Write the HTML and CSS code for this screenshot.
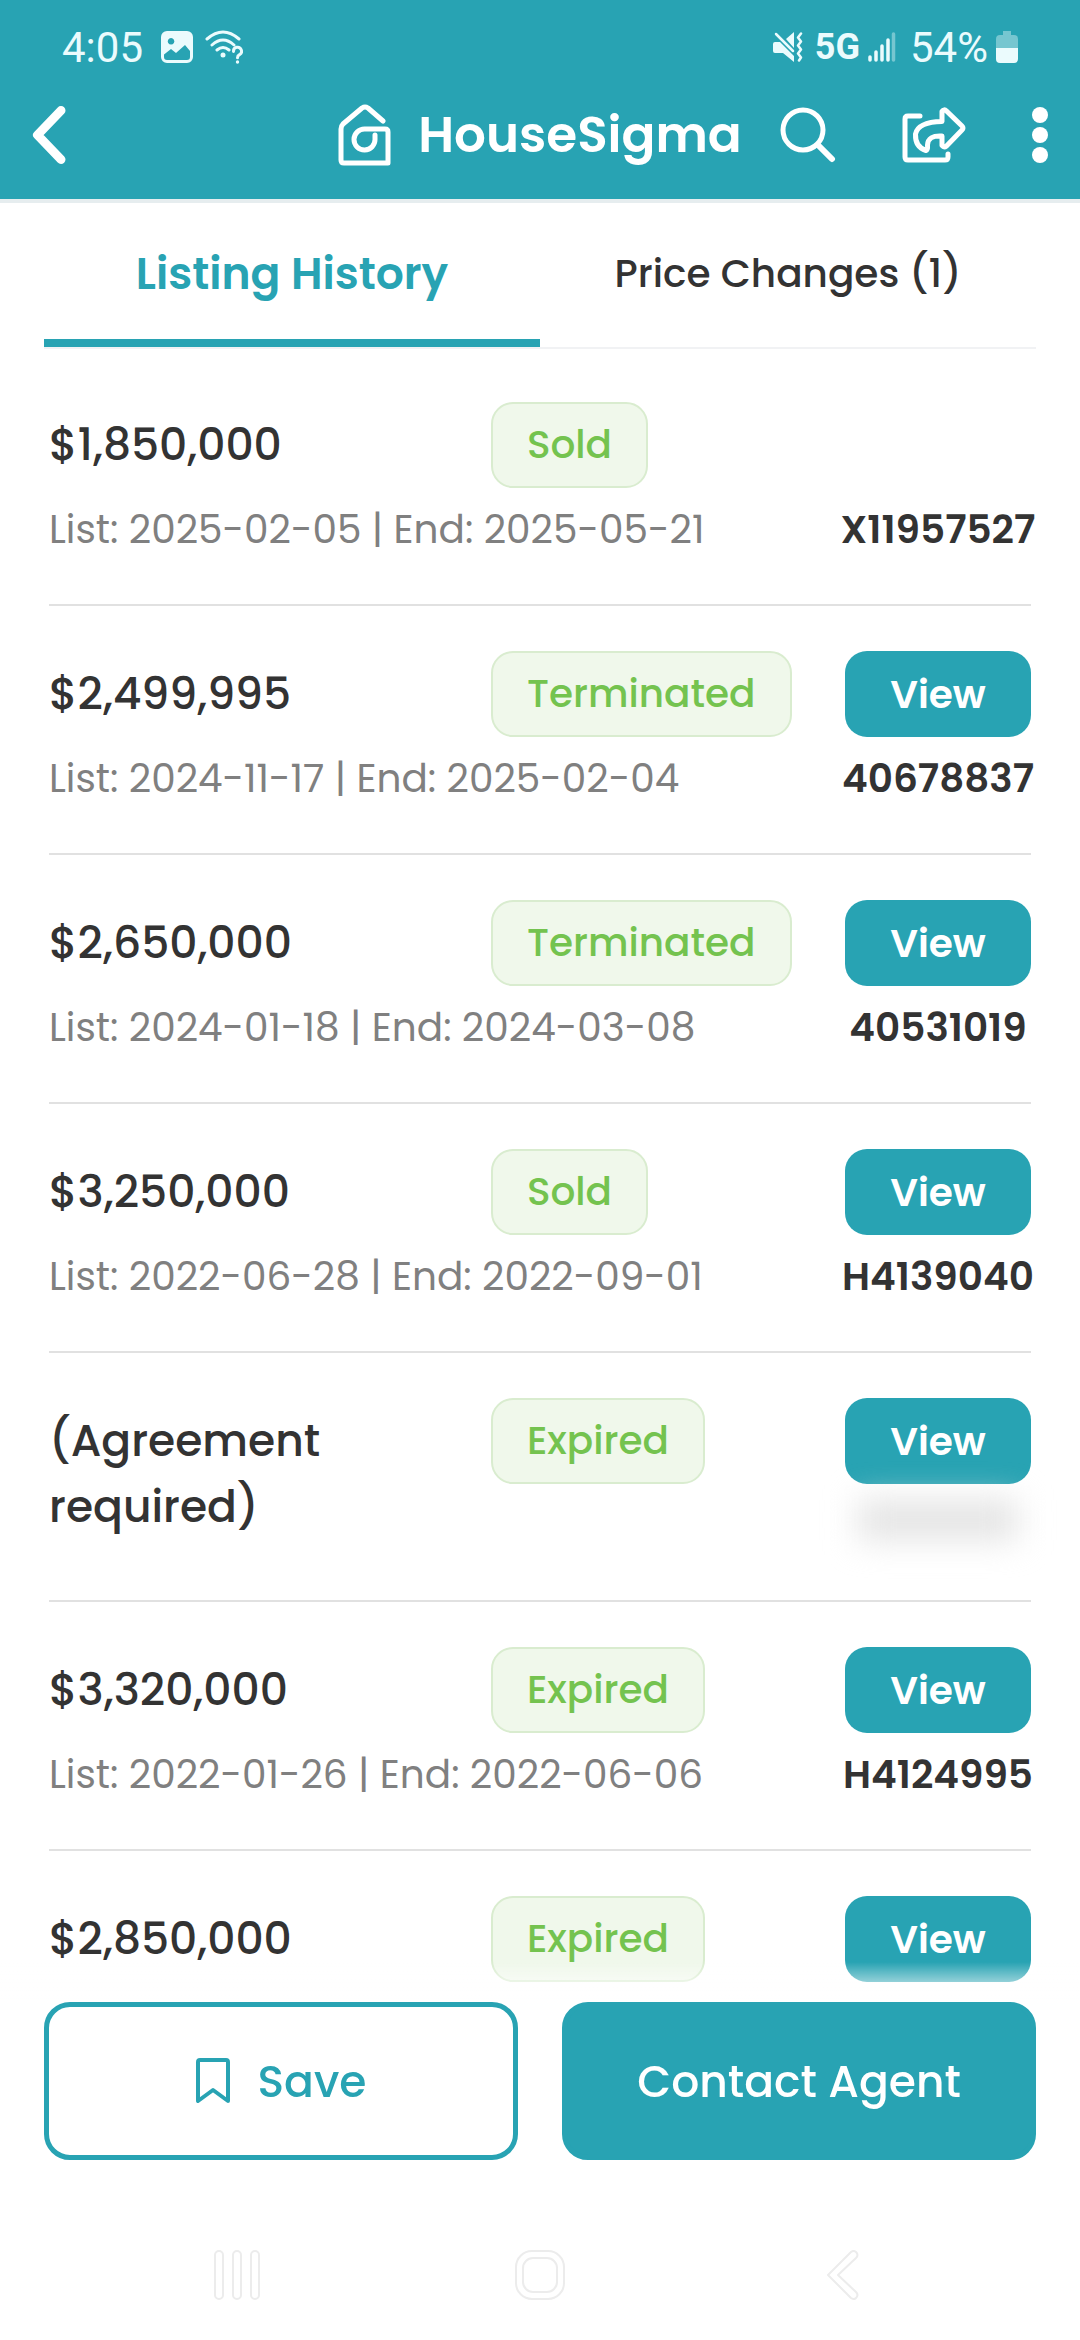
FILE: index.html
```html
<!DOCTYPE html>
<html lang="en">
    <head>
        <meta charset="UTF-8">
        <meta name="viewport" content="width=device-width, initial-scale=1">
        <title>HouseSigma - Listing History</title>
        <link rel="stylesheet" href="styles.css">
    </head>
    <body>
        <header class="header">
            <div class="statusBar">
                <span class="time">4:05</span>
                <svg class="statusImage" width="32" height="32" viewBox="0 0 32 32">
                    <path fill="currentColor" fill-rule="evenodd" d="M6 0H26a6 6 0 0 1 6 6V26a6 6 0 0 1-6 6H6a6 6 0 0 1-6-6V6a6 6 0 0 1 6-6zM10 7a3.300 3.300 0 1 0 .1 0zM3 23.500V26a3 3 0 0 0 3 3H26a3 3 0 0 0 3-3V20l-5-6-9 8-5-4z"/>
                </svg>
                <svg class="statusWifi" width="38" height="34" viewBox="0 0 38 34" fill="none" stroke="currentColor" stroke-width="3" stroke-linecap="round">
                    <path d="M2 9Q18-5 34 9M7 15Q18 5 29 15M12 20Q18 15 24 20"/>
                    <circle cx="18" cy="25" r="2.500" fill="currentColor" stroke="none"/>
                    <path d="M28.500 21.500a4 4 0 1 1 6 3.200q-2 1-2 3"/>
                    <circle cx="32.500" cy="32" r="1.700" fill="currentColor" stroke="none"/>
                </svg>
                <svg class="statusMute" width="30" height="30" viewBox="0 0 30 30">
                    <path fill="currentColor" d="M0 12q0-2 2-2H7L21 24V30L10 21H2q-2 0-2-2zM13 7L21 0V16z"/>
                    <path fill="none" stroke="currentColor" stroke-width="2.500" stroke-linecap="round" d="M3 2L20 19"/>
                    <path fill="none" stroke="currentColor" stroke-width="2.500" stroke-linecap="round" stroke-linejoin="round" d="M28 1.500l-3 4 3 4-3 4 3 4-3 4 3 4-2 3"/>
                </svg>
                <b class="network">5G</b>
                <svg class="statusSignal" width="28" height="30" viewBox="0 0 28 30" stroke="currentColor" stroke-width="3.500" stroke-linecap="round">
                    <path d="M2 25v3M8 20v8M14 14v14M20 8v20"/>
                    <path opacity=".4" d="M25.500 2v26"/>
                </svg>
                <span class="battery">54%</span>
                <svg width="22" height="32" viewBox="0 0 22 32" fill="currentColor">
                    <path opacity=".4" d="M7 0h8v4h3q4 0 4 4v9H0V8q0-4 4-4h3z"/>
                    <path d="M0 17h22v11q0 4-4 4H4q-4 0-4-4z"/>
                </svg>
            </div>
            <nav class="navBar">
                <button type="button" class="iconBtn" aria-label="Back">
                    <svg width="34" height="60" viewBox="0 0 34 60" fill="none" stroke="currentColor" stroke-width="9" stroke-linecap="round" stroke-linejoin="round"><path d="M29 5.500L5.500 30 29 54.500"/></svg>
                </button>
                <a href="#" class="brand">
                    <svg width="53" height="62" viewBox="0 0 53 62" fill="none" stroke="currentColor" stroke-width="5" stroke-linecap="round" stroke-linejoin="round">
                        <path d="M45 17L30 4q-3-2-6 0L5 20Q3 22 3 25V56q0 3 3 3H50V28q0-3-3-3H27A10.500 10.500 0 1 0 37 35V31"/>
                    </svg>
                    <span>HouseSigma</span>
                </a>
                <div class="actions">
                    <button type="button" class="iconBtn" aria-label="Search">
                        <svg width="56" height="56" viewBox="0 0 56 56" fill="none" stroke="currentColor" stroke-linecap="round"><circle cx="23" cy="23" r="20" stroke-width="5"/><path stroke-width="6" d="M39 39L52 52"/></svg>
                    </button>
                    <button type="button" class="iconBtn" aria-label="Share">
                        <svg width="64" height="56" viewBox="0 0 64 56" fill="none" stroke="currentColor" stroke-width="5" stroke-linecap="round" stroke-linejoin="round">
                            <path d="M18 9H6q-3 0-3 3V50q0 3 3 3H43q3 0 3-3V47"/>
                            <path d="M40 4.500Q42 1.500 44.500 4L60 19q2 2 0 4L44.500 39Q42 41 40 38.500V29Q26 28 25.500 38 26 43 24 43.500 13 40 13.500 27 16 15 40 14.500z"/>
                        </svg>
                    </button>
                    <button type="button" class="iconBtn" aria-label="More">
                        <svg width="16" height="56" viewBox="0 0 16 56" fill="currentColor"><circle cx="8" cy="8" r="8"/><circle cx="8" cy="28" r="8"/><circle cx="8" cy="48" r="8"/></svg>
                    </button>
                </div>
            </nav>
        </header>

        <div class="tabs" role="tablist">
            <button type="button" role="tab" aria-selected="true" class="tab active">Listing History</button>
            <button type="button" role="tab" aria-selected="false" class="tab">Price Changes (1)</button>
        </div>

        <ul class="list">
            <li class="item">
                <span class="price">$1,850,000</span>
                <span class="badge">Sold</span>
                <span class="dates">List: 2025-02-05 | End: 2025-05-21</span>
                <span class="mls">X11957527</span>
            </li>
            <li class="item">
                <span class="price">$2,499,995</span>
                <span class="badge">Terminated</span>
                <button type="button" class="viewBtn">View</button>
                <span class="dates">List: 2024-11-17 | End: 2025-02-04</span>
                <span class="mls">40678837</span>
            </li>
            <li class="item">
                <span class="price">$2,650,000</span>
                <span class="badge">Terminated</span>
                <button type="button" class="viewBtn">View</button>
                <span class="dates">List: 2024-01-18 | End: 2024-03-08</span>
                <span class="mls">40531019</span>
            </li>
            <li class="item">
                <span class="price">$3,250,000</span>
                <span class="badge">Sold</span>
                <button type="button" class="viewBtn">View</button>
                <span class="dates">List: 2022-06-28 | End: 2022-09-01</span>
                <span class="mls">H4139040</span>
            </li>
            <li class="item">
                <span class="price locked">(Agreement required)</span>
                <span class="badge">Expired</span>
                <button type="button" class="viewBtn">View</button>
                <span class="mlsHidden"></span>
            </li>
            <li class="item">
                <span class="price">$3,320,000</span>
                <span class="badge">Expired</span>
                <button type="button" class="viewBtn">View</button>
                <span class="dates">List: 2022-01-26 | End: 2022-06-06</span>
                <span class="mls">H4124995</span>
            </li>
            <li class="item">
                <span class="price">$2,850,000</span>
                <span class="badge">Expired</span>
                <button type="button" class="viewBtn">View</button>
            </li>
        </ul>

        <footer class="footer">
            <div class="buttons">
                <button type="button" class="bigBtn saveBtn">
                    <svg width="34" height="46" viewBox="0 0 34 46" fill="none" stroke="currentColor" stroke-width="4" stroke-linejoin="round"><path d="M2 4q0-2 2-2H30q2 0 2 2V43L17 32 2 43z"/></svg>
                    Save
                </button>
                <button type="button" class="bigBtn contactBtn">Contact Agent</button>
            </div>
            <div class="systemNav">
                <svg width="46" height="50" viewBox="0 0 46 50" fill="none" stroke="currentColor" stroke-width="2"><rect x="1" y="1" width="8" height="48" rx="4"/><rect x="19" y="1" width="8" height="48" rx="4"/><rect x="37" y="1" width="8" height="48" rx="4"/></svg>
                <svg width="50" height="50" viewBox="0 0 50 50" fill="none" stroke="currentColor" stroke-width="2"><rect x="1" y="1" width="48" height="48" rx="16"/><rect x="8" y="8" width="34" height="34" rx="10"/></svg>
                <svg width="34" height="50" viewBox="0 0 34 50" fill="none" stroke="currentColor" stroke-width="2" stroke-linejoin="round"><path d="M2 25L25 2q3-2 5 0 3 3 0 6L12 25 30 42q3 3 0 6-2 2-5 0z"/></svg>
            </div>
        </footer>
    </body>
</html>
```

FILE: styles.css
```css
html, body {
    margin: 0px;
    padding: 0px;
}

body {
    background-color: #fff;
    color: #333;
    font-family: "Poppins", "Inter", sans-serif;
}

button {
    margin: 0px;
    padding: 0px;
    border: none;
    background: none;
    color: inherit;
    font-family: inherit;
    cursor: pointer;
}

svg {
    display: block;
    flex: none;
}

/* header */

.header {
    padding-bottom: 23px;
    background-color: #28a3b3;
    border-bottom: 4px solid #e6edef;
    color: #fff;
}

.statusBar {
    display: flex;
    align-items: center;
    height: 94px;
    padding: 0px 62px;
    color: #ebfbfd;
    font-family: Roboto, sans-serif;
    font-size: 42px;
}

.statusImage {
    margin-left: 18px;
}

.statusWifi {
    margin-left: 12px;
}

.statusMute {
    margin-left: auto;
}

.network {
    margin-left: 12px;
    font-size: 36px;
}

.statusSignal {
    margin-left: 8px;
}

.battery {
    margin-left: 14px;
    margin-right: 8px;
}

.navBar {
    display: grid;
    grid-template-columns: 1fr auto 1fr;
    align-items: center;
    height: 82px;
    padding: 0px 32px;
}

.iconBtn {
    justify-self: start;
}

.brand {
    display: flex;
    align-items: center;
    gap: 27px;
    color: #fff;
    font-size: 50px;
    font-weight: 600;
    text-decoration: none;
}

.actions {
    display: flex;
    justify-content: space-between;
    padding-left: 38px;
}

/* tabs */

.tabs {
    display: flex;
    margin: 0px 44px;
    border-bottom: 2px solid #f1f2f4;
}

.tab {
    flex: 1;
    height: 144px;
    border-top: 4px solid transparent;
    border-bottom: 8px solid transparent;
    font-size: 39px;
    font-weight: 500;
}

.tab.active {
    border-bottom-color: #28a3b3;
    color: #28a3b3;
    font-size: 44px;
    font-weight: 600;
}

/* listing rows */

.list {
    margin: 0px;
    padding: 8px 49px 0px;
    list-style: none;
}

.item {
    display: grid;
    grid-template-columns: 45% 1fr 186px;
    grid-template-rows: 86px 84px;
    padding: 45px 0px 32px;
    border-bottom: 2px solid #e1e1e1;
}

.price {
    grid-column: 1;
    grid-row: 1;
    font-size: 44px;
    font-weight: 500;
    line-height: 86px;
}

.price.locked {
    grid-row: 1 / 3;
    padding: 10px 88px 0px 0px;
    line-height: 66px;
}

.badge {
    grid-column: 2;
    grid-row: 1;
    justify-self: start;
    padding: 0px 34px;
    border: 2px solid #d9eccf;
    border-radius: 22px;
    background-color: #f0f8eb;
    color: #74c34f;
    font-size: 39px;
    font-weight: 500;
    line-height: 82px;
}

.viewBtn {
    grid-column: 3;
    grid-row: 1;
    border-radius: 22px;
    background-color: #28a3b3;
    color: #fff;
    font-size: 39px;
    font-weight: 600;
}

.dates {
    grid-column: 1 / 3;
    grid-row: 2;
    color: #808080;
    font-size: 39px;
    line-height: 84px;
    white-space: nowrap;
}

.mls {
    grid-column: 3;
    grid-row: 2;
    justify-self: center;
    font-size: 39px;
    font-weight: 600;
    line-height: 84px;
}

.mlsHidden {
    grid-column: 3;
    grid-row: 2;
    justify-self: center;
    width: 160px;
    height: 40px;
    margin-top: 16px;
    background-color: #e4e4e4;
    filter: blur(16px);
}

/* fixed footer */

.footer {
    position: fixed;
    left: 0px;
    right: 0px;
    bottom: 0px;
    padding-top: 40px;
    background: linear-gradient(rgba(255, 255, 255, 0), #fff 40px);
}

.buttons {
    display: flex;
    gap: 44px;
    padding: 0px 44px 50px;
}

.bigBtn {
    display: flex;
    flex: 1;
    justify-content: center;
    align-items: center;
    gap: 28px;
    box-sizing: border-box;
    height: 158px;
    border: 5px solid #28a3b3;
    border-radius: 26px;
    font-size: 44px;
    font-weight: 500;
}

.saveBtn {
    background-color: #fff;
    color: #28a3b3;
}

.contactBtn {
    background-color: #28a3b3;
    color: #fff;
}

.systemNav {
    display: grid;
    grid-template-columns: repeat(3, 1fr);
    place-items: center;
    height: 130px;
    padding: 0px 86px;
    color: #ececec;
}
```
